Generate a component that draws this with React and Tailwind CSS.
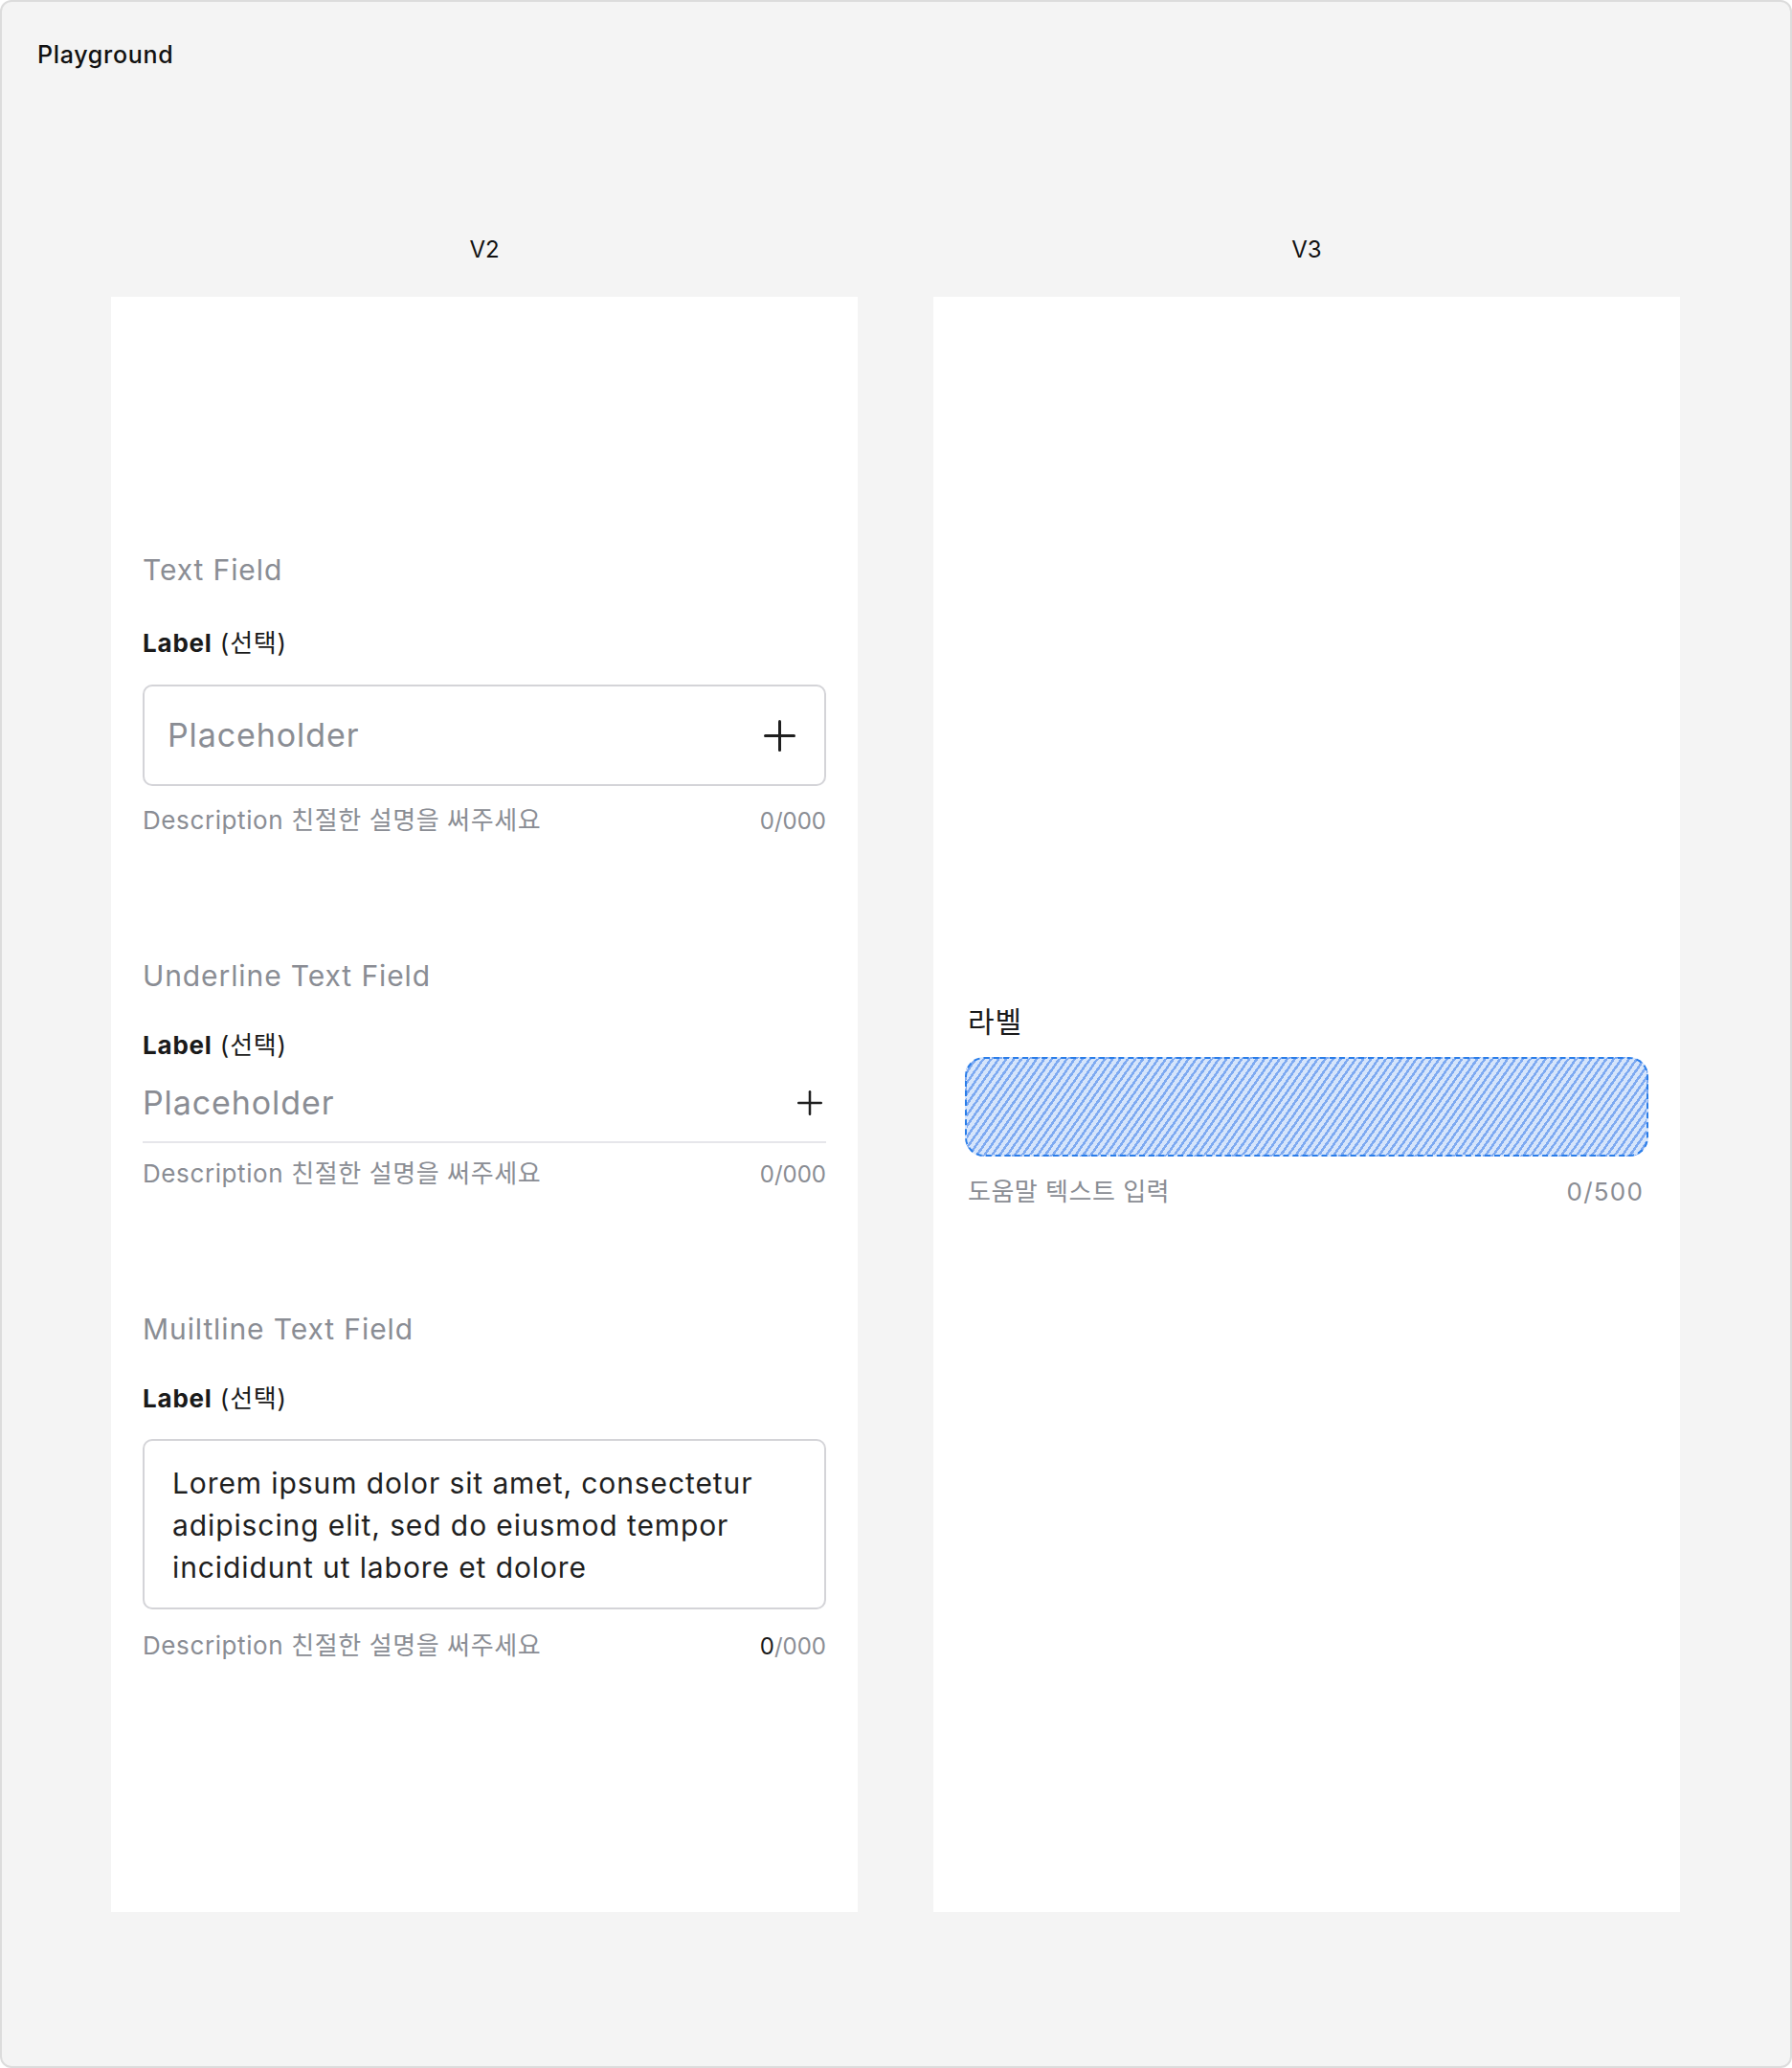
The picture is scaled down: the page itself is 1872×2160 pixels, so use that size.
import React from 'react';

const FONT = "font-['Inter','Noto_Sans_CJK_KR',sans-serif]";

const Plus = ({ size = 33, stroke = 3 }) => (
  <svg width={size} height={size} viewBox={`0 0 ${size} ${size}`} fill="none">
    <line x1={stroke / 2} y1={size / 2} x2={size - stroke / 2} y2={size / 2} stroke="#1f1f1f" strokeWidth={stroke} strokeLinecap="round" />
    <line x1={size / 2} y1={stroke / 2} x2={size / 2} y2={size - stroke / 2} stroke="#1f1f1f" strokeWidth={stroke} strokeLinecap="round" />
  </svg>
);

const Label = () => (
  <div className="text-[26px] leading-[36px] tracking-[0.8px] text-[#1a1a1a]">
    <span className="font-bold">Label</span> <span>(선택)</span>
  </div>
);

const Description = ({ darkFirst = false }) => (
  <div className="flex justify-between items-baseline h-[36px] leading-[36px] text-[#8a8d94]">
    <span className="text-[26px] tracking-[0.6px]">Description 친절한 설명을 써주세요</span>
    <span className="text-[24px]">
      {darkFirst ? <span className="text-[#1a1a1a]">0</span> : '0'}/000
    </span>
  </div>
);

const SectionTitle = ({ children }) => (
  <div className="text-[30px] leading-[40px] tracking-[0.9px] text-[#8a8d94]">{children}</div>
);

const Column = ({ title, children, className = '' }) => (
  <div className="w-[780px] flex flex-col">
    <div className="text-center text-[24px] leading-[32px] text-[#111]">{title}</div>
    <div className={`mt-[33px] h-[1687px] bg-white px-[33px] ${className}`}>{children}</div>
  </div>
);

export default function App() {
  return (
    <div className={`w-[1872px] h-[2160px] bg-[#f4f4f4] border-2 border-[#dcdcdc] rounded-[12px] ${FONT}`}>
      <div className="pl-[37px] pt-[39px] text-[25px] leading-[32px] tracking-[0.7px] font-medium text-[#111]">Playground</div>

      <div className="flex gap-[79px] pl-[114px] mt-[172px]">
        {/* V2 */}
        <Column title="V2" className="pt-[265px]">
          {/* Text Field */}
          <SectionTitle>Text Field</SectionTitle>
          <div className="mt-[39px]">
            <Label />
          </div>
          <div className="mt-[25px] h-[106px] border-2 border-[#d4d4d8] rounded-[10px] flex items-center justify-between pl-[24px] pr-[30px]">
            <span className="text-[34px] leading-[44px] tracking-[0.9px] text-[#8a8d94]">Placeholder</span>
            <Plus size={33} stroke={3} />
          </div>
          <div className="mt-[18px]">
            <Description />
          </div>

          {/* Underline Text Field */}
          <div className="mt-[124px]">
            <SectionTitle>Underline Text Field</SectionTitle>
          </div>
          <div className="mt-[35px]">
            <Label />
          </div>
          <div className="mt-[20px] pb-[18px] border-b-2 border-[#e6e6ea] flex items-center justify-between">
            <span className="text-[34px] leading-[44px] tracking-[0.9px] text-[#8a8d94]">Placeholder</span>
            <span className="mr-[4px]">
              <Plus size={26} stroke={2.5} />
            </span>
          </div>
          <div className="mt-[14px]">
            <Description />
          </div>

          {/* Multiline */}
          <div className="mt-[124px]">
            <SectionTitle>Muiltline Text Field</SectionTitle>
          </div>
          <div className="mt-[35px]">
            <Label />
          </div>
          <div className="mt-[24px] border-2 border-[#d4d4d8] rounded-[10px] pl-[29px] pr-[20px] pt-[22px] pb-[20px] text-[30px] leading-[44px] tracking-[0.9px] text-[#1f1f1f]">
            Lorem ipsum dolor sit amet, consectetur
            <br />
            adipiscing elit, sed do eiusmod tempor
            <br />
            incididunt ut labore et dolore
          </div>
          <div className="mt-[20px]">
            <Description darkFirst />
          </div>
        </Column>

        {/* V3 */}
        <Column title="V3" className="flex flex-col justify-center">
          <div className="ml-[3px] text-[30px] leading-[40px] tracking-[1px] text-[#1a1a1a]">라벨</div>
          <div className="mt-[17px] h-[104px] rounded-[20px] border-2 border-dashed border-[#2a7de9] bg-[repeating-linear-gradient(125deg,#7eaaf1_0px,#7eaaf1_2.5px,#d6e5fb_2.5px,#d6e5fb_6.5px)]" />
          <div className="mt-[21px] flex justify-between items-baseline leading-[32px] text-[#8a8d94]">
            <span className="ml-[3px] text-[26px] tracking-[0.5px]">도움말 텍스트 입력</span>
            <span className="mr-[5px] text-[26px] tracking-[1.2px]">0/500</span>
          </div>
        </Column>
      </div>
    </div>
  );
}
